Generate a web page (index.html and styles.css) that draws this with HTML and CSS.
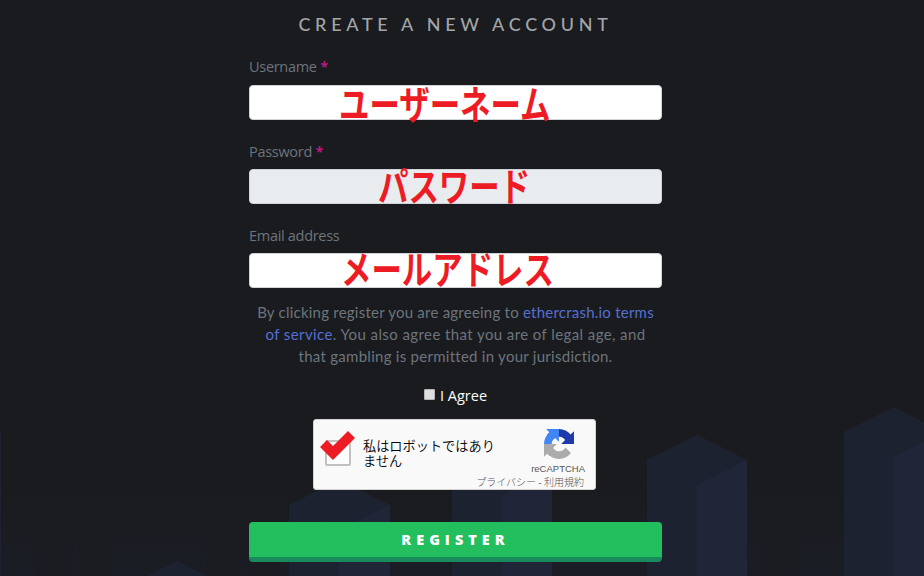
FILE: index.html
```html
<!DOCTYPE html>
<html lang="ja">
<head>
  <meta charset="UTF-8">
  <title>Create a new account</title>
  <meta name="viewport" content="width=device-width, initial-scale=1">
  <link rel="stylesheet" href="styles.css">
</head>
<body>

  <svg class="city" viewBox="0 0 924 576" aria-hidden="true">
    <!-- distant blocks -->
    <g class="far">
      <path d="M36 478L53 470L70 478V576H36zM78 478L95 470L112 478V576H78zM207 478L224 470L241 478V576H207zM249 478L266 470L283 478V576H249zM763 478L780 470L797 478V576H763z"/>
    </g>
    <!-- towers -->
    <g class="left">
      <path d="M0 432H1V576H0z"/>
      <path d="M147 576L177 561L207 576z"/>
      <path d="M289 505L339 480L390 505V576H289z"/>
      <path d="M452 470L502 445L552 470V576H452z"/>
      <path d="M647 460L697 435L747 460V576H647z"/>
      <path d="M844 432L894 407L944 432V576H844z"/>
    </g>
    <g class="right">
      <path d="M339 530L390 505V576H339z"/>
      <path d="M502 495L552 470V576H502z"/>
      <path d="M697 485L747 460V576H697z"/>
      <path d="M894 457L944 432V576H894z"/>
    </g>
    <path class="edge" d="M289 505L339 530V576M647 460L697 485V576M844 432L894 457V576"/>
  </svg>

  <form class="register">
    <h1>CREATE A NEW ACCOUNT</h1>

    <div class="field field-first">
      <label for="username">Username <span class="required">*</span></label>
      <div class="control">
        <input type="text" id="username">
        <span class="note note-user">ユーザーネーム</span>
      </div>
    </div>

    <div class="field">
      <label for="password">Password <span class="required">*</span></label>
      <div class="control">
        <input type="password" id="password" class="filled">
        <span class="note note-pass">パスワード</span>
      </div>
    </div>

    <div class="field">
      <label for="email">Email address</label>
      <div class="control">
        <input type="email" id="email">
        <span class="note note-mail">メールアドレス</span>
      </div>
    </div>

    <p class="terms">
      <span class="line line1">By clicking register you are agreeing to <a href="#">ethercrash.io terms</a></span>
      <span class="line line2"><a href="#">of service</a>. You also agree that you are of legal age, and</span>
      <span class="line line3">that gambling is permitted in your jurisdiction.</span>
    </p>

    <label class="agree"><input type="checkbox"><span>I Agree</span></label>

    <div class="captcha">
      <div class="robot-box">
        <svg class="tick" viewBox="0 0 36 30"><path d="M0 16L7 9L13 15L28 0L35 7L13 29z"/></svg>
      </div>
      <p class="robot-text">私はロボットではあり<br>ません</p>
      <div class="brand">
        <svg class="logo" viewBox="0 0 64 64">
          <path fill="#1c3aa9" d="M64 31.955l-.033-1.37V4.687l-7.16 7.16C50.948 4.674 42.033.093 32.05.093c-10.4 0-19.622 4.96-25.458 12.64l11.736 11.86a15.55 15.55 0 0 1 4.754-5.334c2.05-1.6 4.952-2.906 8.968-2.906.485 0 .86.057 1.135.163 4.976.393 9.288 3.14 11.828 7.124l-8.307 8.307L64 31.953"/>
          <path fill="#4285f4" d="M31.862.094l-1.37.033H4.594l7.16 7.16C4.58 13.147 0 22.06 0 32.046c0 10.4 4.96 19.622 12.64 25.458L24.5 45.768a15.55 15.55 0 0 1-5.334-4.754c-1.6-2.05-2.906-4.952-2.906-8.968 0-.485.057-.86.163-1.135.393-4.976 3.14-9.288 7.124-11.828l8.307 8.307L31.86.095"/>
          <path fill="#ababab" d="M.001 32.045l.033 1.37v25.898l7.16-7.16c5.86 7.173 14.774 11.754 24.76 11.754 10.4 0 19.622-4.96 25.458-12.64l-11.736-11.86a15.55 15.55 0 0 1-4.754 5.334c-2.05 1.6-4.952 2.906-8.968 2.906-.485 0-.86-.057-1.135-.163-4.976-.393-9.288-3.14-11.828-7.124l8.307-8.307c-10.522.04-22.4.066-27.295-.005"/>
        </svg>
        <div class="name">reCAPTCHA</div>
        <div class="links">プライバシー <b>-</b> 利用規約</div>
      </div>
    </div>

    <button type="button">REGISTER</button>
  </form>

</body>
</html>
```
FILE: styles.css
```css
* { margin: 0; padding: 0; box-sizing: border-box; }
body {
  height: 576px;
  overflow: hidden;
  position: relative;
  background: linear-gradient(#1a1b1e 0, #1a1b1e 480px, #1a1d25 576px);
  font-family: 'Open Sans', 'Noto Sans', 'Noto Sans CJK JP', sans-serif;
}
.city { position: absolute; top: 0; left: 0; width: 924px; height: 576px; }
.far { fill: #1b1c1f; opacity: 0.6; }
.left { fill: #1d2231; }
.right { fill: #202538; }
.edge { fill: none; stroke: #212736; stroke-width: 0.7; }

.register {
  position: relative;
  width: 413px;
  margin-left: 249px;
  padding-top: 12px;
}
h1 {
  height: 24px;
  line-height: 24px;
  font-family: Lato, sans-serif;
  font-size: 18px;
  font-weight: 500;
  letter-spacing: 4.7px;
  text-align: center;
  white-space: nowrap;
  color: #a3a5a8;
}
.field { height: 84px; padding-top: 20px; }
.field-first { padding-top: 19px; }
.field label {
  display: block;
  height: 29px;
  line-height: 23px;
  font-size: 14.5px;
  letter-spacing: -0.3px;
  color: #6c757d;
}
.field-first label { height: 30px; }
.required { color: #c9188a; font-weight: 600; }
.control { position: relative; }
.control input {
  display: block;
  width: 413px;
  height: 35px;
  border: 1px solid #ced4da;
  border-radius: 4px;
  background: #fff;
}
.control .filled { background: #e9ecef; }

/* large red notes over the inputs */
.note {
  position: absolute;
  top: -5px;
  line-height: 40px;
  font-family: 'Noto Sans CJK JP', sans-serif;
  font-size: 39px;
  font-weight: 700;
  white-space: nowrap;
  color: #ed1c24;
  transform: scaleX(0.78);
  transform-origin: 0 0;
}
.note-user { top: -3px; left: 90px; }
.note-pass { left: 129px; }
.note-mail { top: -6px; left: 92px; }

.terms {
  margin-top: 13px;
  font-family: Lato, sans-serif;
  font-size: 15px;
  line-height: 22px;
  text-align: center;
  color: #6c757d;
}
.line { display: block; white-space: nowrap; }
.line1 { letter-spacing: 0.23px; }
.line2 { letter-spacing: 0.41px; }
.line3 { letter-spacing: 0.27px; }
.terms a { color: #5570d4; text-decoration: none; }

.agree {
  display: flex;
  height: 22px;
  margin: 18px 0 0 175px;
  gap: 5px;
  line-height: 22px;
  font-size: 14.5px;
  color: #fff;
}
.agree input {
  appearance: none;
  width: 11px;
  height: 11px;
  margin-top: 4px;
  border: 1px solid #b5b5b5;
  border-radius: 1px;
  background: #dedede;
}

.captcha {
  display: flex;
  width: 283px;
  height: 71px;
  margin: 12px 0 0 64px;
  border: 1px solid #d3d3d3;
  border-radius: 3px;
  background: #f9f9f9;
}
.robot-box {
  position: relative;
  width: 26px;
  height: 26px;
  margin: 20px 0 0 11px;
  border: 2px solid #c1c1c1;
  border-radius: 2px;
  background: #fff;
}
.tick { position: absolute; top: -11px; left: -7px; width: 36px; height: 30px; }
.tick path { fill: #ed1c24; }
.robot-text {
  width: 140px;
  margin: 19px 0 0 12px;
  font-family: 'Liberation Sans', 'Noto Sans CJK JP', sans-serif;
  font-size: 13.2px;
  font-weight: 350;
  line-height: 15px;
  color: #000;
  white-space: nowrap;
}
.brand {
  display: flex;
  flex-direction: column;
  align-items: flex-end;
  width: 82px;
  padding-top: 9px;
  font-family: 'Liberation Sans', 'Noto Sans CJK JP', sans-serif;
  color: #555;
}
.logo { width: 30px; height: 30px; margin-right: 11px; }
.name { height: 13px; line-height: 13px; margin-top: 3px; font-size: 9.5px; }
.links {
  height: 14px;
  margin-right: 1px;
  line-height: 14px;
  font-family: 'Noto Sans CJK JP', sans-serif;
  font-size: 10px;
  font-weight: 300;
  white-space: nowrap;
}

button {
  display: block;
  width: 413px;
  height: 40px;
  margin-top: 32px;
  border: none;
  border-bottom: 5px solid #198a5b;
  border-radius: 4px;
  background: #23be5d;
  font-family: 'Open Sans', sans-serif;
  font-size: 14.5px;
  font-weight: 800;
  letter-spacing: 5px;
  color: #fff;
}
```
